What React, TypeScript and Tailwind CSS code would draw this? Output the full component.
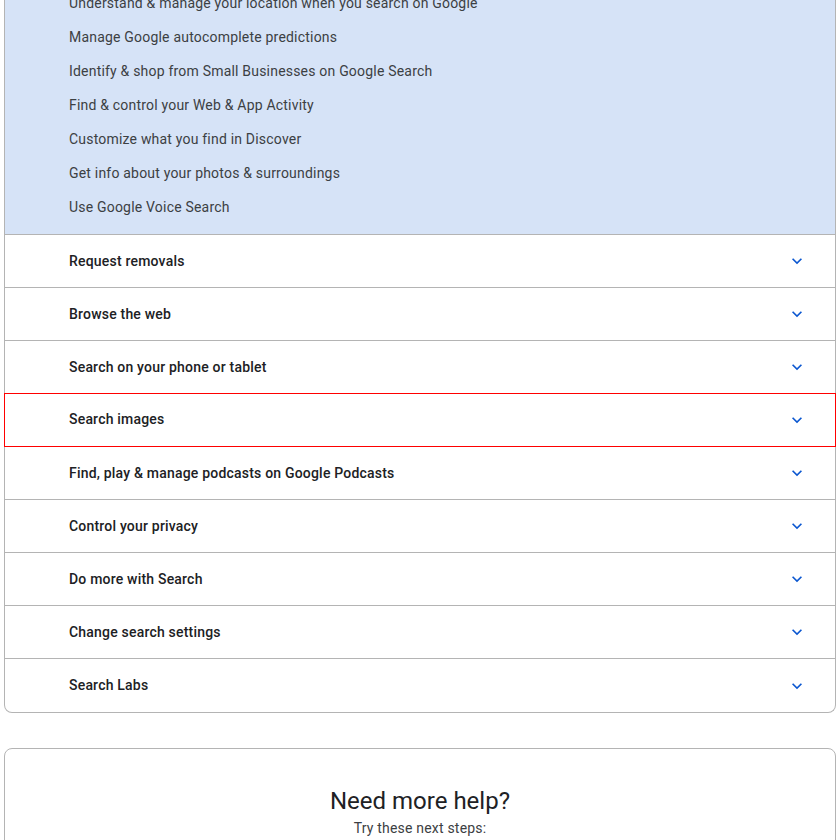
import React from 'react';

const subItems = [
  'Understand & manage your location when you search on Google',
  'Manage Google autocomplete predictions',
  'Identify & shop from Small Businesses on Google Search',
  'Find & control your Web & App Activity',
  'Customize what you find in Discover',
  'Get info about your photos & surroundings',
  'Use Google Voice Search',
];

const sections = [
  'Request removals',
  'Browse the web',
  'Search on your phone or tablet',
  'Search images',
  'Find, play & manage podcasts on Google Podcasts',
  'Control your privacy',
  'Do more with Search',
  'Change search settings',
  'Search Labs',
];

const Chevron = () => (
  <svg width="20" height="20" viewBox="0 0 24 24" className="text-[#0b57d0]">
    <path fill="currentColor" d="M16.59 8.59L12 13.17 7.41 8.59 6 10l6 6 6-6z" />
  </svg>
);

export default function App() {
  return (
    <div className="min-h-[840px] bg-white px-[4px] font-['Roboto',sans-serif] tracking-[0.2px] overflow-hidden">
      {/* Accordion panel */}
      <div className="-mt-[14px] border-x border-b border-[#b4b4b4] rounded-b-lg">
        <ul className="bg-[#d6e3f7] pb-[10px] border-b border-[#b4b4b4]">
          {subItems.map((t) => (
            <li key={t} className="h-[34px] flex items-center pl-[64px] text-[14px] text-[#3c4043]">
              {t}
            </li>
          ))}
        </ul>
        {sections.map((t, i) => (
          <div
            key={t}
            className={`h-[53px] flex items-center justify-between pl-[64px] pr-[28px] ${
              i < sections.length - 1 ? 'border-b border-[#b4b4b4]' : ''
            }`}
          >
            <div
              className={`flex-1 h-full flex items-center justify-between ${
                t === 'Search images' ? 'outline outline-1 outline-[#ff0000] -ml-[64px] pl-[64px] -mr-[28px] pr-[28px] -mt-px h-[53px]' : ''
              }`}
            >
              <span className="text-[14px] font-medium text-[#202124]">{t}</span>
              <Chevron />
            </div>
          </div>
        ))}
      </div>

      {/* Help card */}
      <div className="mt-[35px] border border-[#b4b4b4] rounded-lg pt-[36px] pb-[40px] flex flex-col items-center">
        <h2 className="text-[24px] leading-[32px] text-[#202124] tracking-normal">Need more help?</h2>
        <p className="text-[14px] text-[#3c4043] leading-[20px] mt-[1px]">Try these next steps:</p>
      </div>
    </div>
  );
}
